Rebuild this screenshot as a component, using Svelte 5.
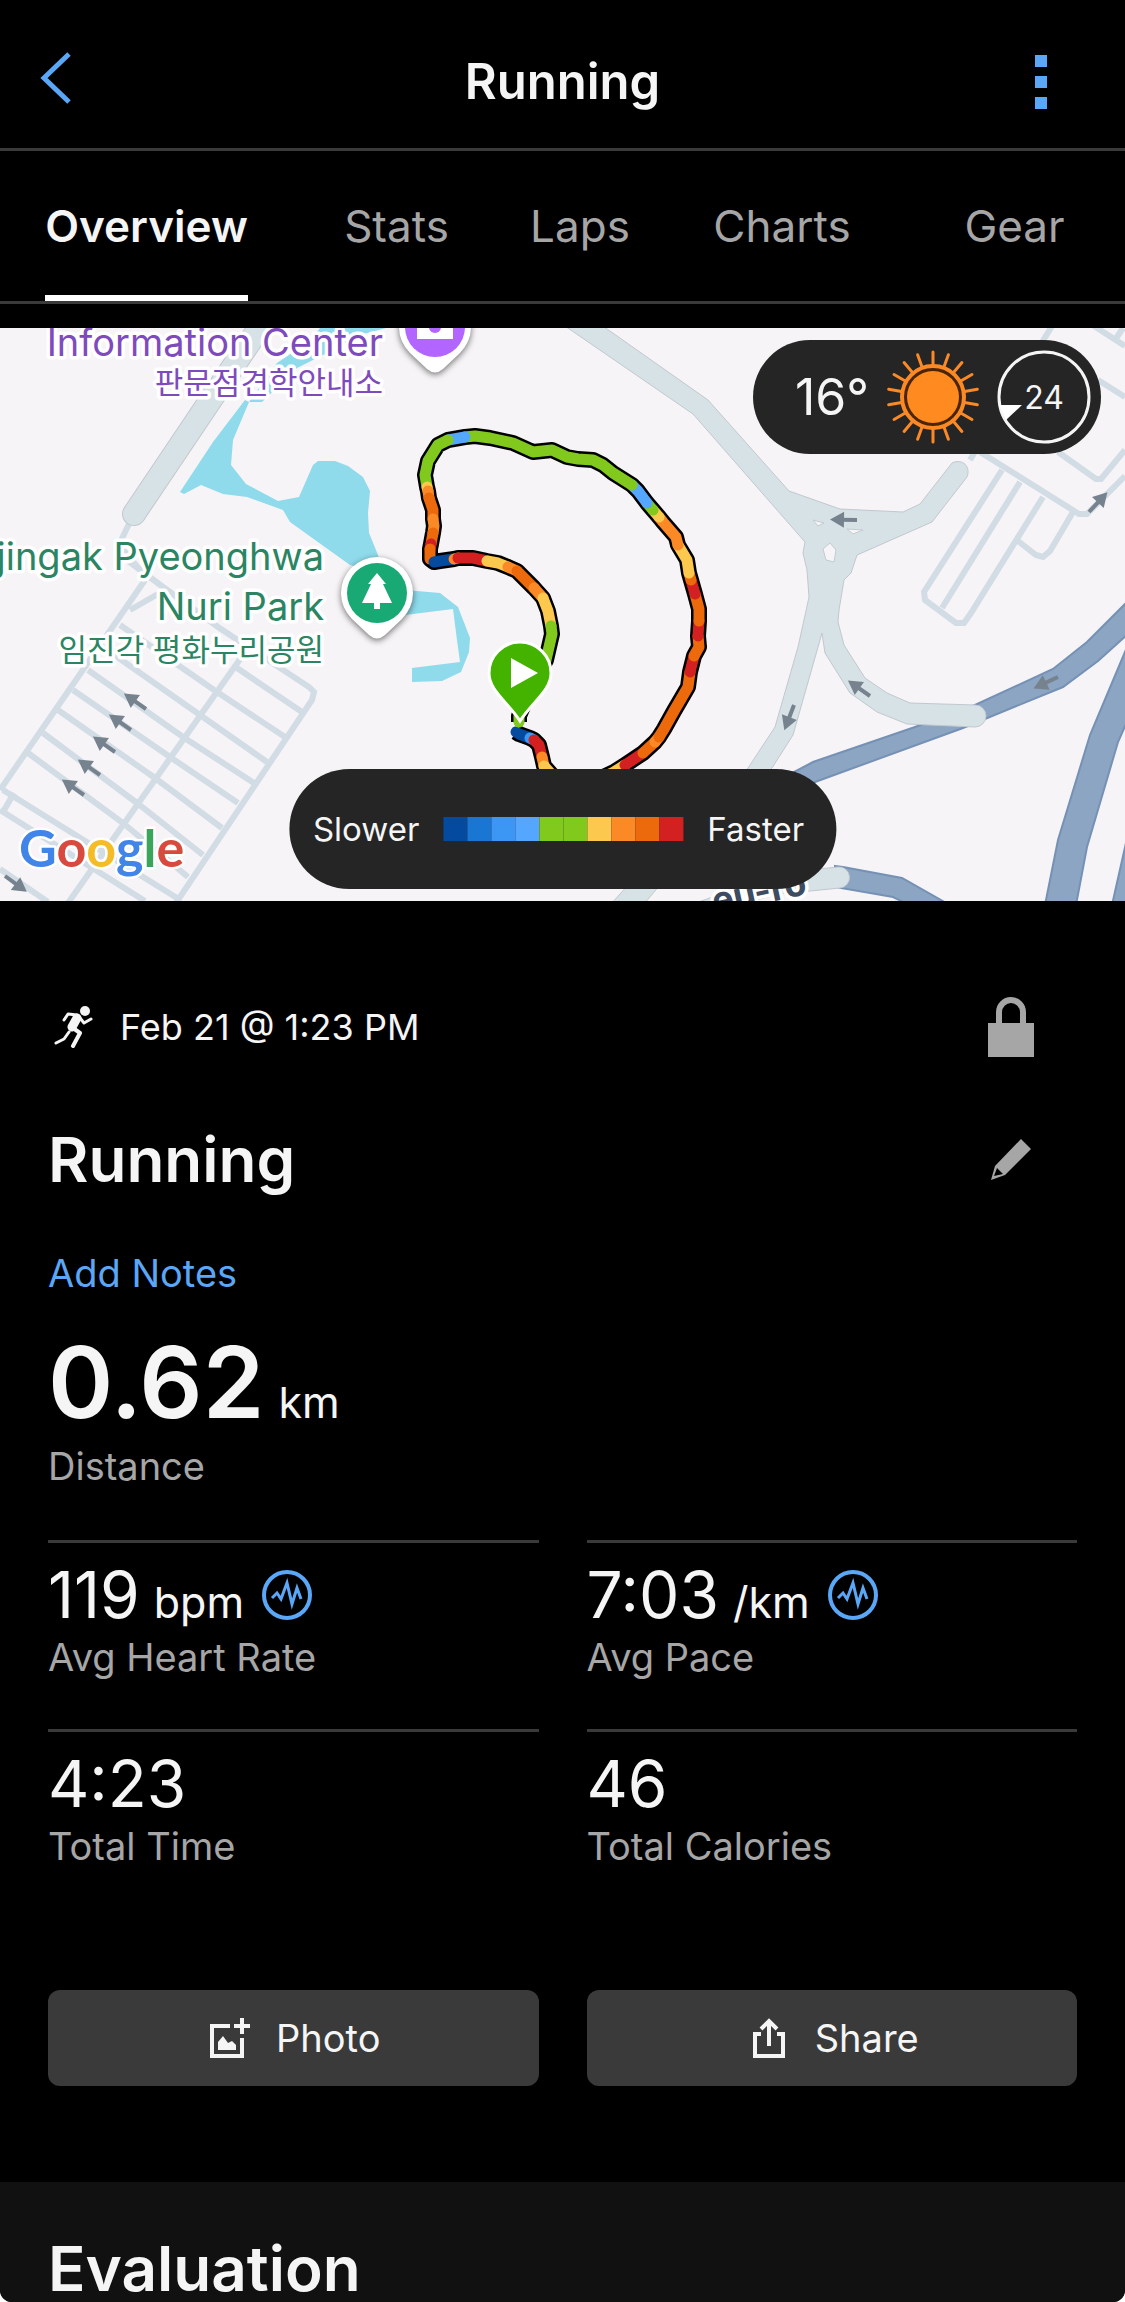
<script lang="ts">
  type Segment = { color: string; points: string };

  const tabs = ["Overview", "Stats", "Laps", "Charts", "Gear"];
  let activeTab = $state("Overview");

  const pace = {
    navy: "#044a9f",
    blue: "#1976d2",
    azure: "#3c96f3",
    sky: "#55a6ff",
    green: "#82c91e",
    yellow: "#fcc84d",
    amber: "#fb8926",
    orange: "#ec6a0c",
    red: "#d32020",
  };

  const legend = [
    pace.navy,
    pace.blue,
    pace.azure,
    pace.sky,
    pace.green,
    pace.green,
    pace.yellow,
    pace.amber,
    pace.orange,
    pace.red,
  ];

  const stats = [
    { value: "119", unit: "bpm", label: "Avg Heart Rate", chart: true },
    { value: "7:03", unit: "/km", label: "Avg Pace", chart: true },
    { value: "4:23", unit: "", label: "Total Time", chart: false },
    { value: "46", unit: "", label: "Total Calories", chart: false },
  ];

  const route: Segment[] = [
    { color: pace.navy, points: "516,732 519,734 530,738" },
    { color: pace.azure, points: "530,738 534,740" },
    { color: pace.red, points: "534,740 539,745 542,757" },
    { color: pace.amber, points: "542,757 544,766" },
    { color: pace.yellow, points: "544,766 552,775 580,788 614,772 625,765" },
    { color: pace.red, points: "625,765 643,753" },
    { color: pace.orange, points: "643,753 655,742" },
    { color: pace.amber, points: "655,742 659,737" },
    { color: pace.orange, points: "659,737 664,729 674,711 688,687 690,672" },
    { color: pace.red, points: "690,672 694,656" },
    { color: pace.orange, points: "694,656 699,647 698,636" },
    { color: pace.red, points: "698,636 699,621" },
    { color: pace.orange, points: "699,621 699,609 695,594" },
    { color: pace.red, points: "695,594 691,580" },
    { color: pace.orange, points: "691,580 689,573" },
    { color: pace.yellow, points: "689,573 687,560 678,545" },
    { color: pace.amber, points: "678,545 676,537 663,522 659,517" },
    { color: pace.yellow, points: "659,517 653,510" },
    { color: pace.green, points: "653,510 647,503" },
    { color: pace.sky, points: "647,503 638,491 632,485" },
    {
      color: pace.green,
      points: "632,485 613,473 603,465 593,460 578,459 567,457 552,450 533,452 513,443 490,438 475,436 465,437",
    },
    { color: pace.sky, points: "465,437 448,440" },
    { color: pace.green, points: "448,440 438,445 428,461 425,475 427,487" },
    { color: pace.yellow, points: "427,487 428,491" },
    { color: pace.amber, points: "428,491 429,498" },
    { color: pace.orange, points: "429,498 433,510 433,519" },
    { color: pace.amber, points: "433,519 434,526 433,533" },
    { color: pace.orange, points: "433,533 431,544" },
    { color: pace.red, points: "431,544 430,549" },
    { color: pace.orange, points: "430,549 430,559" },
    { color: pace.navy, points: "434,562 440,561 454,559" },
    { color: pace.amber, points: "454,559 458,558" },
    { color: pace.red, points: "458,558 473,558 487,561" },
    { color: pace.yellow, points: "487,561 498,563 508,567" },
    { color: pace.amber, points: "508,567 517,571" },
    { color: pace.orange, points: "517,571 534,588" },
    { color: pace.amber, points: "534,588 543,598" },
    { color: pace.yellow, points: "543,598 548,611 551,626" },
    { color: pace.green, points: "551,626 552,634 549,647 546,660 530,690 519,716 519,722" },
  ];
  const routeLine = route.map((segment) => segment.points).join(" ");

  const parkingLines = [
    "145,580 0,790",
    "250,645 68,903",
    "127,560 163,587 218,627 309,687 314,692 312,700 176,903",
    "120,625 217,692 285,737",
    "103,647 200,715 267,762",
    "88,670 183,737 254,783",
    "73,690 170,757 238,803",
    "58,710 155,778 222,828",
    "43,733 137,803 203,855",
    "28,753 123,823 188,877",
    "237,668 302,712",
    "3,790 177,898",
    "0,810 145,901",
    "14,793 3,812",
    "0,869 48,902",
    "165,590 130,610",
    "1052,326 970,460",
    "1094,326 1125,346",
    "1123,328 1115,340",
    "1098,380 1125,397",
    "1058,452 1096,479 1101,479 1125,450",
    "980,452 1079,514 1087,514 1125,476",
    "1002,470 924,592 925,600 956,623 964,623 971,613 1043,497",
    "1020,482 942,608",
    "1073,512 1050,551 1043,557 1036,555 1018,541",
  ];

  const arrows = [
    { x: 146, y: 709, angle: 215 },
    { x: 131, y: 730, angle: 215 },
    { x: 115, y: 752, angle: 215 },
    { x: 100, y: 775, angle: 215 },
    { x: 84, y: 795, angle: 215 },
    { x: 5, y: 876, angle: 36 },
    { x: 857, y: 520, angle: 181 },
    { x: 794, y: 705, angle: 111 },
    { x: 870, y: 696, angle: 215 },
    { x: 1058, y: 677, angle: 155 },
    { x: 1089, y: 512, angle: 313 },
  ];

  const rays = Array.from({ length: 18 }, (_, i) => i * 20);
</script>

{#snippet placePin()}
  <path
    class="pin-shape"
    d="M-25 26A36 36 0 1 1 25 26L8 42Q0 49-8 42Z"
  />
{/snippet}

<div class="screen">
  <header class="app-bar">
    <button class="back" aria-label="Back">
      <svg width="32" height="60" viewBox="0 0 32 60">
        <path d="M29 2 4 26 29 50" fill="none" stroke="currentColor" stroke-width="5" />
      </svg>
    </button>
    <h1>Running</h1>
    <button class="more" aria-label="More options">
      <svg width="12" height="54" viewBox="0 0 12 54" fill="currentColor">
        <path d="M0 0h12v12H0zM0 21h12v12H0zM0 42h12v12H0z" />
      </svg>
    </button>
  </header>

  <nav class="tabs">
    {#each tabs as tab (tab)}
      <button class:active={tab === activeTab} onclick={() => (activeTab = tab)}>{tab}</button>
    {/each}
  </nav>

  <section class="map">
    <svg class="map-canvas" viewBox="0 328 1125 573" role="img" aria-label="Route map">
      <defs>
        <g id="arrow">
          <path d="M0 0H15" stroke="currentColor" stroke-width="4" />
          <path d="M13-8 27 0 13 8Z" fill="currentColor" />
        </g>
      </defs>

      <!-- water -->
      <g fill="#8fdaeb">
        <path d="M320 328H386L360 335 333 350 297 368 262 402 249 402 277 363 310 341Z" />
        <path
          d="M245 400 249 402 233 440 231 465 246 484 278 501 299 497 313 465 318 461H335L348 466 363 477 370 491 368 513 369 533 378 555 383 573 350 565 290 522 283 510 247 497 223 494 201 485 184 494 180 492 213 442Z"
        />
        <path
          d="M405 590 440 593 458 607 470 638 469 652 461 672 442 681 412 682V668L460 662 457 640 453 609 405 615Z"
        />
      </g>

      <!-- parking lanes -->
      <g class="lanes">
        {#each parkingLines as points (points)}
          <polyline {points} />
        {/each}
        <path d="M134 514 126 530 119 545 140 570" />
      </g>

      <!-- highways -->
      <g class="highway">
        <path
          d="M760 790 813 762 915 727 975 705 1053 669 1087 642 1130 599V632L1098 661 1063 687 963 728 815 782 760 810Z"
        />
        <path d="M1130 640 1090 735 1058 840 1045 905H1076L1087 847 1118 742 1130 715Z" />
        <path d="M1130 825 1112 905H1130Z" />
        <path d="M835 866 843 867 902 878 955 908H915L893 897 835 887Z" />
      </g>

      <!-- local roads -->
      <path class="road-edge" d="M134 514 216 392 268 315" />
      <path class="road-fill" d="M134 514 216 392 268 315" />
      <g class="road">
        <path
          d="M562 324 693 414 805 542 803 553 807 570 809 597 804 620 798 647 775 727 748 768 660 850 610 905H643L690 850 772 768 793 735 822 633 825 653 850 693 877 712 907 724 975 727A11 11 0 0 0 975 705L910 703 887 693 865 678 844 645 838 622 839 610 844 580 851 573 857 555 932 522 967 477C971 467 963 458 952 463L920 504 903 512 840 509 789 491 708 400 600 324Z"
        />
        <path d="M780 873 838 867A10 10 0 0 1 840 888L780 894 715 910 690 905Z" />
      </g>
      <g fill="#f6f4f6" stroke="#c3cbd2" stroke-width="1">
        <path d="M830 543 836 550 834 562 826 560 823 549Z" />
        <path d="M813 520 824 523 818 526Z" />
        <path d="M847 529 863 530 853 534Z" />
      </g>

      <g color="#76838f">
        {#each arrows as arrow}
          <use href="#arrow" transform="translate({arrow.x} {arrow.y}) rotate({arrow.angle})" />
        {/each}
      </g>

      <!-- place names -->
      <g class="place" text-anchor="end">
        <text class="center" x="383" y="356" font-size="38">Information Center</text>
        <text class="center" x="383" y="394" font-size="31">판문점견학안내소</text>
        <text class="park" x="324" y="570" font-size="38">jingak Pyeonghwa</text>
        <text class="park" x="324" y="620" font-size="38">Nuri Park</text>
        <text class="park" x="324" y="661" font-size="31">임진각 평화누리공원</text>
        <text class="street" x="808" y="894" font-size="36" transform="rotate(-12 808 894)">eu-ro</text>
      </g>

      <g transform="translate(435 327)">
        {@render placePin()}
        <circle r="30" fill="#b266ff" />
        <path d="M-18-10H18V12H-18Z" fill="#fff" />
        <circle r="6" fill="#b266ff" />
      </g>
      <g transform="translate(377 593)">
        {@render placePin()}
        <circle r="30" fill="#19a974" />
        <path d="M0-20 9-9H6L15 10H3V16H-3V10H-15L-6-9H-9Z" fill="#fff" />
      </g>

      <!-- route coloured by pace -->
      <g fill="none" stroke-linejoin="round">
        <polyline points={routeLine} stroke="#000" stroke-width="16" />
        {#each route as segment}
          <polyline
            points={segment.points}
            stroke={segment.color}
            stroke-width="11"
            stroke-linecap="round"
          />
        {/each}
      </g>

      <g transform="translate(520 673)">
        <path
          d="M-31 0A31 31 0 0 1 31 0C31 18 12 29 0 48C-12 29-31 18-31 0Z"
          fill="#43b300"
          stroke="#fff"
          stroke-width="3"
        />
        <path d="M-9-15 18 0-9 15Z" fill="#fff" />
      </g>

      <text class="google" x="19" y="867">
        <tspan fill="#4285e8">G</tspan><tspan fill="#d94a3e">o</tspan><tspan fill="#f4bd27">o</tspan><tspan
          fill="#4285e8">g</tspan><tspan fill="#3ba55b">l</tspan><tspan fill="#d94a3e">e</tspan>
      </text>
    </svg>

    <div class="weather">
      <span class="temperature">16°</span>
      <svg width="92" height="94" viewBox="-46 -47 92 94" aria-label="Sunny">
        {#each rays as angle}
          <path
            d="M0-32V-45"
            stroke="#fb8926"
            stroke-width="3"
            stroke-linecap="round"
            transform="rotate({angle})"
          />
        {/each}
        <circle r="31" fill="#4a2500" stroke="#fb8926" stroke-width="4" />
        <circle r="26" fill="#ff8a1f" />
      </svg>
      <svg width="94" height="94" viewBox="-47 -47 94 94" aria-label="Wind">
        <circle r="45" fill="none" stroke="#f5f5f5" stroke-width="3" />
        <path d="M-22 8H-45L-38 23Z" fill="#fff" />
        <text class="wind" x="0" y="12">24</text>
      </svg>
    </div>

    <div class="legend">
      <span>Slower</span>
      <div class="scale">
        {#each legend as color}
          <i style:background={color}></i>
        {/each}
      </div>
      <span>Faster</span>
    </div>
  </section>

  <main>
    <div class="row meta">
      <svg width="40" height="42" viewBox="0 0 40 42" fill="none" stroke="currentColor">
        <circle cx="31" cy="5" r="5" fill="currentColor" stroke="none" />
        <g stroke-linecap="round" stroke-linejoin="round">
          <path d="M23 9 14 8 10 14" stroke-width="3" />
          <path d="M26 12 30 17 37 13" stroke-width="3" />
          <path d="M23 12 18 21" stroke-width="9" />
          <path d="M19 22 26 27 19 40" stroke-width="4" />
          <path d="M15 26 10 33 2 37" stroke-width="3" />
        </g>
      </svg>
      <time>Feb 21 @ 1:23 PM</time>
      <button class="icon" aria-label="Privacy">
        <svg width="46" height="60" viewBox="0 0 46 60">
          <path d="M0 26H46V60H0Z" fill="currentColor" />
          <path d="M11 26V15a12 12 0 0 1 24 0V26" fill="none" stroke="currentColor" stroke-width="6" />
        </svg>
      </button>
    </div>

    <div class="row title">
      <h2>Running</h2>
      <button class="icon" aria-label="Edit name">
        <svg width="40" height="42" viewBox="0 0 40 42" fill="currentColor" fill-rule="evenodd">
          <path d="M30 0 40 10 14 36 0 41 4 27ZM6 29 3 37 12 35Z" />
        </svg>
      </button>
    </div>

    <a class="notes" href="#notes">Add Notes</a>

    <div class="distance">
      <p class="value"><strong>0.62</strong> <span class="unit">km</span></p>
      <p class="label">Distance</p>
    </div>

    <div class="stats">
      {#each stats as stat (stat.label)}
        <div class="stat">
          <p class="value">
            {stat.value}
            {#if stat.unit}<span class="unit">{stat.unit}</span>{/if}
            {#if stat.chart}
              <button class="chart" aria-label="{stat.label} chart">
                <svg width="50" height="50" viewBox="0 0 50 50" fill="none" stroke="currentColor">
                  <circle cx="25" cy="25" r="23" stroke-width="4" />
                  <path d="M10 28 15 23 19 29 25 13 30 34 35 18 39 29" stroke-width="3" />
                </svg>
              </button>
            {/if}
          </p>
          <p class="label">{stat.label}</p>
        </div>
      {/each}
    </div>

    <div class="actions">
      <button>
        <svg width="40" height="40" viewBox="0 0 40 40" fill="none" stroke="currentColor" stroke-width="4">
          <path d="M20 8H2V38H32V20M32 0V16M24 8H40" />
          <path d="M8 32V24L13 18 18 25 22 23 26 27V32Z" fill="currentColor" stroke="none" />
        </svg>
        Photo
      </button>
      <button>
        <svg width="40" height="40" viewBox="0 0 40 40" fill="none" stroke="currentColor" stroke-width="4">
          <path d="M12 16H6V38H34V16H28M20 28V4M12 11 20 3 28 11" />
        </svg>
        Share
      </button>
    </div>
  </main>

  <section class="evaluation">
    <h2>Evaluation</h2>
  </section>
</div>

<style>
  :global(body) {
    background: #fff;
  }

  .screen {
    overflow: hidden;
    border-radius: 0 0 12px 12px;
    background: #000;
    color: #f5f5f5;
    font-family: Inter, "Noto Sans CJK KR", sans-serif;
  }

  h1,
  h2,
  p {
    margin: 0;
    font-weight: 600;
  }

  button {
    padding: 0;
    border: 0;
    background: none;
    color: inherit;
    font: inherit;
    cursor: pointer;
  }

  svg {
    display: block;
    flex-shrink: 0;
  }

  .app-bar {
    display: grid;
    grid-template-columns: 1fr auto 1fr;
    align-items: center;
    height: 132px;
    padding: 16px 78px 0 40px;
    border-bottom: 3px solid #3a3a3a;
  }

  .app-bar h1 {
    /* evens out the side paddings */
    padding-left: 38px;
    font-size: 49px;
    line-height: 60px;
  }

  .back,
  .more {
    color: #5aa7f7;
  }

  .back {
    justify-self: start;
  }

  .more {
    justify-self: end;
  }

  .tabs {
    display: grid;
    grid-template-columns: 293fr 207fr 160fr 244fr 221fr;
    justify-items: center;
    margin-bottom: 24px;
    border-bottom: 3px solid #3a3a3a;
  }

  .tabs button {
    padding: 6px 0 0;
    height: 150px;
    border-bottom: 6px solid transparent;
    color: #a6a6a6;
    font-size: 44px;
  }

  .tabs .active {
    border-color: #fff;
    color: #f5f5f5;
    font-weight: 600;
  }

  .map {
    position: relative;
    background: #f6f4f6;
  }

  .map-canvas {
    width: 100%;
    height: auto;
  }

  .lanes {
    fill: none;
    stroke: #d1dce5;
    stroke-width: 6;
  }

  .highway {
    fill: #8ba5c2;
    stroke: #7591b5;
    stroke-width: 2;
  }

  .road {
    fill: #d7e2e6;
    stroke: #c1c8d0;
    stroke-width: 1;
  }

  .road-edge,
  .road-fill {
    fill: none;
    stroke: #c1c8d0;
    stroke-width: 24;
    stroke-linecap: round;
  }

  .road-fill {
    stroke: #d7e2e6;
    stroke-width: 22;
  }

  .place {
    stroke: #fff;
    stroke-width: 7;
    stroke-linejoin: round;
    paint-order: stroke;
  }

  .center {
    fill: #7e4bbd;
  }

  .park {
    fill: #2b8562;
  }

  .street {
    fill: #3d4c60;
    font-weight: 700;
  }

  .pin-shape {
    fill: #fff;
    filter: drop-shadow(0 2px 3px #0008);
  }

  .google {
    font: 700 52px Lato, sans-serif;
    stroke: #fff;
    stroke-width: 5;
    stroke-linejoin: round;
    paint-order: stroke;
  }

  .weather,
  .legend {
    position: absolute;
    display: flex;
    align-items: center;
    box-sizing: border-box;
    border-radius: 60px;
    background: #252525;
  }

  .weather {
    top: 12px;
    right: 24px;
    height: 114px;
    gap: 18px;
    padding: 0 10px 0 42px;
  }

  .temperature {
    font-size: 50px;
  }

  .wind {
    fill: #f5f5f5;
    font-size: 32px;
    text-anchor: middle;
  }

  .legend {
    bottom: 12px;
    left: 50%;
    height: 120px;
    gap: 24px;
    padding: 0 32px 0 24px;
    transform: translateX(-50%);
    font-size: 33px;
  }

  .scale {
    display: flex;
  }

  .scale i {
    width: 24px;
    height: 24px;
  }

  main {
    padding: 96px 48px;
  }

  .row {
    display: flex;
    align-items: center;
  }

  .meta {
    gap: 26px;
    height: 60px;
    padding-left: 6px;
    font-size: 36px;
  }

  .icon {
    display: flex;
    justify-content: center;
    width: 60px;
    margin: 0 36px 0 auto;
    color: #a6a6a6;
  }

  .title {
    margin-top: 63px;
  }

  .title h2 {
    font-size: 62px;
    line-height: 80px;
  }

  .notes {
    display: block;
    width: fit-content;
    margin: 49px 0 30px;
    color: #5aa7f7;
    font-size: 38px;
    line-height: 48px;
    text-decoration: none;
  }

  .value {
    display: flex;
    align-items: baseline;
    gap: 14px;
    font-weight: 400;
  }

  .value strong {
    font-size: 99px;
    font-weight: 600;
    line-height: 110px;
  }

  .unit {
    font-size: 43px;
    line-height: 48px;
  }

  .label {
    color: #a6a6a6;
    font-size: 38px;
    font-weight: 400;
    line-height: 48px;
  }

  .distance .label {
    margin-top: 5px;
  }

  .stats {
    display: grid;
    grid-template-columns: 1fr 1fr;
    gap: 48px;
    margin: 50px 0 120px;
  }

  .stat {
    padding-top: 16px;
    border-top: 3px solid #3a3a3a;
  }

  .stat .value {
    margin-bottom: 2px;
    font-size: 64px;
    line-height: 72px;
  }

  .chart {
    align-self: center;
    margin-left: 4px;
    color: #5aa7f7;
  }

  .actions {
    display: grid;
    grid-template-columns: 1fr 1fr;
    gap: 48px;
  }

  .actions button {
    display: flex;
    align-items: center;
    justify-content: center;
    gap: 26px;
    height: 96px;
    padding-left: 4px;
    border-radius: 12px;
    background: #3a3a3a;
    font-size: 38px;
  }

  .evaluation {
    padding: 55px 48px 1px;
    background: #111;
  }

  .evaluation h2 {
    font-size: 62px;
    line-height: 64px;
  }
</style>
